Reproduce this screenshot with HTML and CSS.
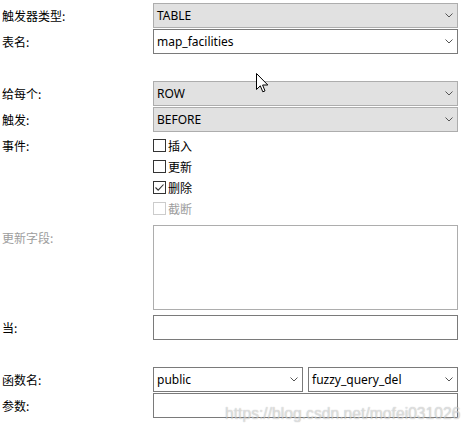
FILE: index.html
```html
<!DOCTYPE html>
<html>
<head>
<meta charset="utf-8">
<link rel="stylesheet" href="styles.css">
</head>
<body>
<div class="form">
  <div class="row">
    <div class="label">触发器类型:</div>
    <div class="combo gray"><span>TABLE</span><svg class="chev" width="8" height="5" viewBox="0 0 8 5"><path d="M0.5 0.5 L4 4 L7.5 0.5" fill="none" stroke="#555" stroke-width="1"/></svg></div>
  </div>
  <div class="row r-gap1">
    <div class="label">表名:</div>
    <div class="combo white"><span>map_facilities</span><svg class="chev" width="8" height="5" viewBox="0 0 8 5"><path d="M0.5 0.5 L4 4 L7.5 0.5" fill="none" stroke="#555" stroke-width="1"/></svg></div>
  </div>
  <div class="row r-gap27">
    <div class="label">给每个:</div>
    <div class="combo gray"><span>ROW</span><svg class="chev" width="8" height="5" viewBox="0 0 8 5"><path d="M0.5 0.5 L4 4 L7.5 0.5" fill="none" stroke="#555" stroke-width="1"/></svg></div>
  </div>
  <div class="row r-gap1">
    <div class="label">触发:</div>
    <div class="combo gray"><span>BEFORE</span><svg class="chev" width="8" height="5" viewBox="0 0 8 5"><path d="M0.5 0.5 L4 4 L7.5 0.5" fill="none" stroke="#555" stroke-width="1"/></svg></div>
  </div>
  <div class="events">
    <div class="label ev-label">事件:</div>
    <div class="checks">
      <div class="check"><span class="box"></span><span>插入</span></div>
      <div class="check"><span class="box"></span><span>更新</span></div>
      <div class="check"><span class="box"><svg width="11" height="11" viewBox="0 0 11 11"><path d="M1.5 5.5 L4.2 8.2 L9.5 2.5" fill="none" stroke="#333" stroke-width="1.1"/></svg></span><span>删除</span></div>
      <div class="check disabled"><span class="box"></span><span>截断</span></div>
    </div>
  </div>
  <div class="area-row">
    <div class="label disabled-text area-label">更新字段:</div>
    <div class="area"></div>
  </div>
  <div class="row r-gap5">
    <div class="label">当:</div>
    <div class="input"></div>
  </div>
  <div class="row r-gap27">
    <div class="label">函数名:</div>
    <div class="pair">
      <div class="combo white"><span>public</span><svg class="chev" width="8" height="5" viewBox="0 0 8 5"><path d="M0.5 0.5 L4 4 L7.5 0.5" fill="none" stroke="#555" stroke-width="1"/></svg></div>
      <div class="combo white"><span>fuzzy_query_del</span><svg class="chev" width="8" height="5" viewBox="0 0 8 5"><path d="M0.5 0.5 L4 4 L7.5 0.5" fill="none" stroke="#555" stroke-width="1"/></svg></div>
    </div>
  </div>
  <div class="row r-gap1">
    <div class="label">参数:</div>
    <div class="input"></div>
  </div>
</div>
<svg class="cursor" width="13" height="21" viewBox="0 0 13 21"><path d="M0.5 0.5 L0.5 16.5 L4.3 12.8 L6.8 18.8 L9 17.9 L6.6 12 L11.8 12 Z" fill="#fff" stroke="#000" stroke-width="1" stroke-linejoin="miter"/></svg>
<div class="watermark">https://blog.csdn.net/mofei031026</div>
</body>
</html>
```
FILE: styles.css
```css
html, body {
  margin: 0;
  padding: 0;
  background: #fff;
}
body {
  width: 471px;
  height: 435px;
  position: relative;
  overflow: hidden;
  font-family: "Noto Sans", "Noto Sans CJK SC", sans-serif;
  font-size: 12px;
  color: #000;
}
.form {
  padding-top: 3px;
  padding-left: 2px;
}
.row {
  display: flex;
  align-items: center;
  height: 25px;
}
.r-gap1 { margin-top: 1px; }
.r-gap5 { margin-top: 5px; }
.r-gap27 { margin-top: 27px; }
.label {
  width: 151px;
  flex: none;
  font-family: "Noto Sans CJK SC", sans-serif;
  font-size: 12px;
  line-height: 16px;
}
.combo, .input {
  box-sizing: border-box;
  width: 305px;
  height: 25px;
  display: flex;
  align-items: center;
  justify-content: space-between;
  padding: 0 4px 0 3px;
  font-family: "Noto Sans", sans-serif;
  font-size: 12px;
}
.combo span { line-height: 16px; }
.gray {
  background: #e1e1e1;
  border: 1px solid #adadad;
}
.white, .input {
  background: #fff;
  border: 1px solid #7a7a7a;
}
.chev { flex: none; }
.pair {
  display: flex;
  gap: 5px;
  width: 305px;
}
.pair .combo:first-child { width: 150px; }
.pair .combo:last-child { width: 150px; }
.events {
  display: flex;
  margin-top: 3px;
}
.ev-label { height: 21px; line-height: 21px; }
.checks {
  display: flex;
  flex-direction: column;
}
.check {
  height: 21px;
  display: flex;
  align-items: center;
  gap: 2px;
  font-family: "Noto Sans CJK SC", sans-serif;
  font-size: 12px;
}
.box {
  box-sizing: border-box;
  width: 13px;
  height: 13px;
  border: 1px solid #333;
  background: #fff;
  display: flex;
  align-items: center;
  justify-content: center;
}
.check.disabled { color: #9d9d9d; }
.check.disabled .box { border-color: #cccccc; }
.disabled-text { color: #9d9d9d; }
.area-row {
  display: flex;
  margin-top: 6px;
}
.area-label { height: 25px; line-height: 25px; }
.area {
  box-sizing: border-box;
  width: 305px;
  height: 85px;
  border: 1px solid #adadad;
  background: #fff;
}
.cursor {
  position: absolute;
  left: 256px;
  top: 73px;
}
.watermark {
  position: absolute;
  left: 225px;
  top: 405px;
  font-family: "Liberation Sans", Arial, sans-serif;
  font-size: 15.7px;
  color: rgba(255, 255, 255, 0.55);
  text-shadow: 0 0 1px rgba(0, 0, 0, 0.35);
  white-space: nowrap;
}
```
